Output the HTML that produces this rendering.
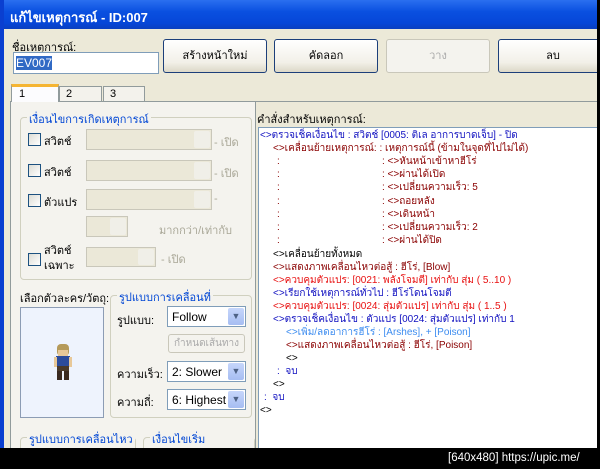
<!DOCTYPE html>
<html><head><meta charset="utf-8"><style>
*{box-sizing:border-box;margin:0;padding:0}
body{width:600px;height:469px;overflow:hidden;background:#000;font-family:"Liberation Sans","Noto Sans CJK SC",sans-serif;font-size:11px;color:#000;position:relative}
.a{position:absolute;white-space:nowrap}
#win{position:absolute;left:0;top:0;width:597px;height:448px;background:#ece9d8;border-left:4px solid #0a3fd0;overflow:hidden}
#title{position:absolute;left:0;top:0;width:600px;height:29px;background:linear-gradient(#2a6ff0,#0a50e0 40%,#0646d8 80%,#0a3fc0);color:#fff;font-weight:bold;font-size:13px;padding:7px 0 0 6px}
.btn{position:absolute;border:1px solid #1c3f7a;border-radius:3px;background:linear-gradient(#fff,#f2f0e8 70%,#dcd8c8);text-align:center;font-size:11px}
.dis{border-color:#c9c7ba;color:#aaa;background:#f4f3ee}
.inp{position:absolute;border:1px solid #7f9db9;background:#fff}
.grp{position:absolute;border:1px solid #d0d0bf;border-radius:4px}
.gl{position:absolute;top:-8px;left:6px;background:#f4f3ee;padding:0 2px;color:#0046d5}
.cb{position:absolute;width:13px;height:13px;border:1px solid #1c5180;background:linear-gradient(135deg,#dcdcd4,#fff)}
.cmb{position:absolute;border:1px solid #c9c7ba;background:#ebe8d8}
.cmb i{position:absolute;right:1px;top:1px;bottom:1px;width:16px;background:#f0efe8;border-radius:2px}
.cmbw{position:absolute;border:1px solid #7f9db9;background:#fff;padding:3px 0 0 4px;font-size:12px}
.cmbw i{position:absolute;right:1px;top:1px;bottom:1px;width:16px;background:linear-gradient(#c6d6fb,#a6bdf2);border-radius:2px;color:#4d6185;font-style:normal;font-size:9px;text-align:center;line-height:17px}
.gray{color:#a9a797}
.l{position:absolute;white-space:nowrap;font-size:10px;line-height:13px}
.bl{color:#1010c0}.dr{color:#8a0000}.rd{color:#e81010}.lb{color:#3c8cf0}
</style></head><body>
<div id="win">
<div id="title">แก้ไขเหตุการณ์ - ID:007</div>
<div class="a" style="left:8px;top:38px">ชื่อเหตุการณ์:</div>
<div class="inp" style="left:9px;top:52px;width:146px;height:22px"><span style="background:#316ac5;color:#fff;margin:3px 0 0 2px;display:inline-block;font-size:12px">EV007</span></div>
<div class="btn" style="left:159px;top:39px;width:104px;height:34px;line-height:32px">สร้างหน้าใหม่</div>
<div class="btn" style="left:270px;top:39px;width:104px;height:34px;line-height:32px">คัดลอก</div>
<div class="btn dis" style="left:382px;top:39px;width:104px;height:34px;line-height:32px">วาง</div>
<div class="btn" style="left:494px;top:39px;width:110px;height:34px;line-height:32px">ลบ</div>
<div class="a" style="left:6px;top:101px;width:590px;border-top:1px solid #919b9c"></div>
<div class="a" style="left:7px;top:84px;width:48px;height:18px;background:#fcfcfe;border:1px solid #919b9c;border-top:3px solid #f5b533;border-bottom:none;padding:1px 0 0 7px">1</div>
<div class="a" style="left:55px;top:86px;width:43px;height:15px;background:#f3f2ec;border:1px solid #919b9c;border-bottom:none;padding:1px 0 0 6px">2</div>
<div class="a" style="left:99px;top:86px;width:42px;height:15px;background:#f3f2ec;border:1px solid #919b9c;border-bottom:none;padding:1px 0 0 6px">3</div>
<div class="a" style="left:6px;top:102px;width:246px;height:350px;border-left:1px solid #919b9c;border-right:1px solid #919b9c;background:#f4f3ee"></div>
<div class="grp" style="left:16px;top:117px;width:232px;height:163px"><span class="gl">เงื่อนไขการเกิดเหตุการณ์</span></div>
<div class="cb" style="left:24px;top:133px"></div><div class="a" style="left:40px;top:132px">สวิตช์</div>
<div class="cmb" style="left:82px;top:129px;width:126px;height:21px"><i></i></div><div class="a gray" style="left:210px;top:133px">- เปิด</div>
<div class="cb" style="left:24px;top:164px"></div><div class="a" style="left:40px;top:163px">สวิตช์</div>
<div class="cmb" style="left:82px;top:160px;width:126px;height:21px"><i></i></div><div class="a gray" style="left:210px;top:164px">- เปิด</div>
<div class="cb" style="left:24px;top:194px"></div><div class="a" style="left:40px;top:193px">ตัวแปร</div>
<div class="cmb" style="left:82px;top:189px;width:126px;height:21px"><i></i></div><div class="a gray" style="left:210px;top:193px">-</div>
<div class="cmb" style="left:82px;top:216px;width:42px;height:21px"><i></i></div><div class="a gray" style="left:155px;top:221px">มากกว่า/เท่ากับ</div>
<div class="cb" style="left:24px;top:253px"></div><div class="a" style="left:40px;top:244px;line-height:15px">สวิตช์<br>เฉพาะ</div>
<div class="cmb" style="left:82px;top:247px;width:70px;height:20px"><i></i></div><div class="a gray" style="left:157px;top:250px">- เปิด</div>
<div class="a" style="left:16px;top:289px">เลือกตัวละคร/วัตถุ:</div>
<div class="a" style="left:16px;top:307px;width:84px;height:111px;background:#eef3fd;border:1px solid #8c9cb4"></div>
<svg class="a" style="left:48px;top:343px" width="22" height="40" viewBox="0 0 22 40">
<rect x="5" y="1" width="12" height="12" rx="4" fill="#b59a5a"/><rect x="6" y="7" width="10" height="6" fill="#e8c898"/>
<rect x="4" y="13" width="14" height="11" fill="#2c4c9c"/><rect x="2" y="14" width="3" height="10" fill="#e8c898"/><rect x="17" y="14" width="3" height="10" fill="#e8c898"/>
<rect x="5" y="23" width="12" height="5" fill="#4a3a2a"/><rect x="5" y="28" width="5" height="9" fill="#3a2a20"/><rect x="12" y="28" width="5" height="9" fill="#3a2a20"/></svg>
<div class="grp" style="left:106px;top:295px;width:142px;height:123px"><span class="gl">รูปแบบการเคลื่อนที่</span></div>
<div class="a" style="left:113px;top:311px">รูปแบบ:</div>
<div class="cmbw" style="left:163px;top:306px;width:79px;height:21px">Follow<i>▼</i></div>
<div class="btn dis" style="left:164px;top:334px;width:77px;height:19px;line-height:17px;font-size:10px">กำหนดเส้นทาง</div>
<div class="a" style="left:113px;top:365px">ความเร็ว:</div>
<div class="cmbw" style="left:163px;top:361px;width:79px;height:21px">2: Slower<i>▼</i></div>
<div class="a" style="left:113px;top:393px">ความถี่:</div>
<div class="cmbw" style="left:163px;top:389px;width:79px;height:21px">6: Highest<i>▼</i></div>
<div class="grp" style="left:16px;top:437px;width:116px;height:30px"><span class="gl">รูปแบบการเคลื่อนไหว</span></div>
<div class="grp" style="left:139px;top:437px;width:112px;height:30px"><span class="gl">เงื่อนไขเริ่มเหตุการณ์</span></div>
<div class="a" style="left:253px;top:110px">คำสั่งสำหรับเหตุการณ์:</div>
<div class="a" style="left:254px;top:127px;width:345px;height:325px;background:#fff;border:1px solid #7f9db9"></div>
<div class="l bl" style="left:256px;top:129px">&lt;&gt;ตรวจเช็คเงื่อนไข : สวิตช์ [0005: ติเล อาการบาดเจ็บ] - ปิด</div>
<div class="l dr" style="left:269px;top:142px">&lt;&gt;เคลื่อนย้ายเหตุการณ์: : เหตุการณ์นี้ (ข้ามในจุดที่ไปไม่ได้)</div>
<div class="l dr" style="left:273px;top:155px;line-height:13.2px">:<br>:<br>:<br>:<br>:<br>:<br>:</div>
<div class="l dr" style="left:378px;top:155px;line-height:13.2px">: &lt;&gt;หันหน้าเข้าหาฮีโร่<br>: &lt;&gt;ผ่านได้เปิด<br>: &lt;&gt;เปลี่ยนความเร็ว: 5<br>: &lt;&gt;ถอยหลัง<br>: &lt;&gt;เดินหน้า<br>: &lt;&gt;เปลี่ยนความเร็ว: 2<br>: &lt;&gt;ผ่านได้ปิด</div>
<div class="l" style="left:269px;top:248px">&lt;&gt;เคลื่อนย้ายทั้งหมด</div>
<div class="l dr" style="left:269px;top:261px">&lt;&gt;แสดงภาพเคลื่อนไหวต่อสู้ : ฮีโร่, [Blow]</div>
<div class="l rd" style="left:269px;top:274px">&lt;&gt;ควบคุมตัวแปร: [0021: พลังโจมตี] เท่ากับ สุ่ม ( 5..10 )</div>
<div class="l bl" style="left:269px;top:287px">&lt;&gt;เรียกใช้เหตุการณ์ทั่วไป : ฮีโร่โดนโจมตี</div>
<div class="l rd" style="left:269px;top:300px">&lt;&gt;ควบคุมตัวแปร: [0024: สุ่มตัวแปร] เท่ากับ สุ่ม ( 1..5 )</div>
<div class="l bl" style="left:269px;top:313px">&lt;&gt;ตรวจเช็คเงื่อนไข : ตัวแปร [0024: สุ่มตัวแปร] เท่ากับ 1</div>
<div class="l lb" style="left:282px;top:326px">&lt;&gt;เพิ่ม/ลดอาการฮีโร่ : [Arshes], + [Poison]</div>
<div class="l dr" style="left:282px;top:339px">&lt;&gt;แสดงภาพเคลื่อนไหวต่อสู้ : ฮีโร่, [Poison]</div>
<div class="l" style="left:282px;top:352px">&lt;&gt;</div>
<div class="l bl" style="left:273px;top:365px">:&nbsp; จบ</div>
<div class="l" style="left:269px;top:378px">&lt;&gt;</div>
<div class="l bl" style="left:260px;top:391px">:&nbsp; จบ</div>
<div class="l" style="left:256px;top:404px">&lt;&gt;</div>
</div>
<div class="a" style="left:0;top:448px;width:600px;height:21px;background:#000"></div>
<div class="a" style="left:448px;top:452px;color:#fff;font-family:'Liberation Sans',sans-serif;font-size:11.5px">[640x480] https://upic.me/</div>
</body></html>
